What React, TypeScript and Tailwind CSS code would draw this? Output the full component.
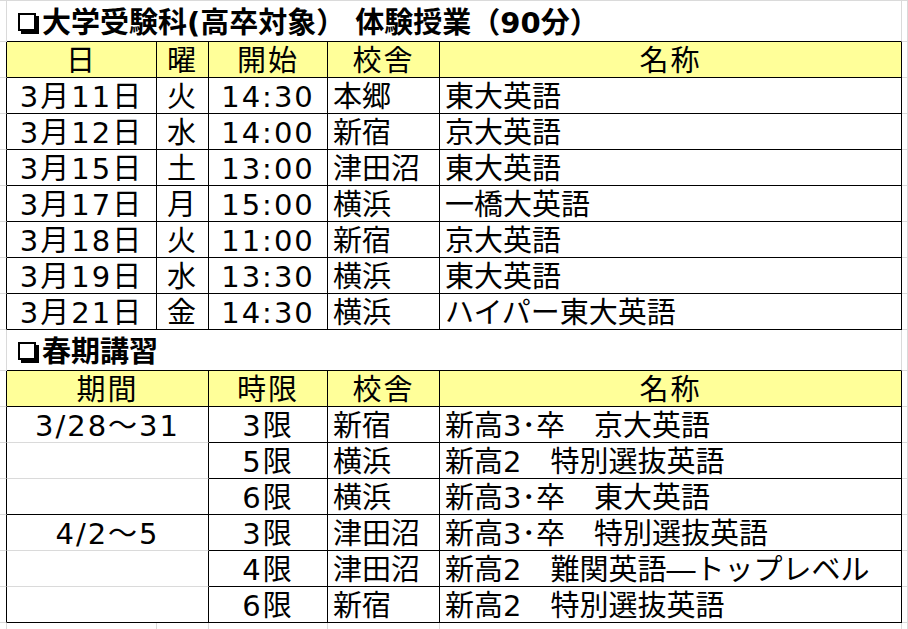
import type { ReactNode } from "react"

// Excel-style sheet: column boundaries at 7 / 157 / 209 / 328 / 440 / 902
const trial = [
  ["3月11日", "火", "14:30", "本郷", "東大英語"],
  ["3月12日", "水", "14:00", "新宿", "京大英語"],
  ["3月15日", "土", "13:00", "津田沼", "東大英語"],
  ["3月17日", "月", "15:00", "横浜", "一橋大英語"],
  ["3月18日", "火", "11:00", "新宿", "京大英語"],
  ["3月19日", "水", "13:30", "横浜", "東大英語"],
  ["3月21日", "金", "14:30", "横浜", "ハイパー東大英語"],
]

const spring: { term: string; period: string; school: string; name: string; last: boolean }[] = [
  { term: "3/28～31", period: "3限", school: "新宿", name: "新高3･卒　京大英語", last: false },
  { term: "", period: "5限", school: "横浜", name: "新高2　特別選抜英語", last: false },
  { term: "", period: "6限", school: "横浜", name: "新高3･卒　東大英語", last: true },
  { term: "4/2～5", period: "3限", school: "津田沼", name: "新高3･卒　特別選抜英語", last: false },
  { term: "", period: "4限", school: "津田沼", name: "新高2　難関英語―トップレベル", last: false },
  { term: "", period: "6限", school: "新宿", name: "新高2　特別選抜英語", last: true },
]

const RIGHT = {
  k: "border-r border-r-black",
  g: "border-r border-r-[#dadada]",
  n: "",
}
const BOTTOM = {
  k: "border-b border-b-black",
  g: "border-b border-b-[#dadada]",
  n: "",
}
const ALIGN = {
  c: "justify-center tracking-[2px]",
  l: "justify-start pl-[5px]",
  t: "justify-start pl-[11px] font-bold",
}

type Line = keyof typeof RIGHT

function Cell({
  w,
  r = "g",
  b = "g",
  align = "c",
  children,
}: {
  w: string
  r?: Line
  b?: Line
  align?: keyof typeof ALIGN
  children?: ReactNode
}) {
  return (
    <div
      className={`flex h-full shrink-0 items-center overflow-visible whitespace-pre pt-[4px] ${w} ${RIGHT[r]} ${BOTTOM[b]} ${ALIGN[align]}`}
    >
      {children}
    </div>
  )
}

const A = "w-[7px]"
const B = "w-[150px]"
const C = "w-[52px]"
const BC = "w-[202px]"
const D = "w-[119px]"
const E = "w-[112px]"
const F = "w-[462px]"
const BF = "w-[895px]"
const G = "w-[6px] grow"

// ❑ drawn as a shadowed box, the font's glyph has no shadow
function Box() {
  return (
    <span className="mr-[6px] mb-[3px] inline-block h-[18px] w-[18px] border-2 border-black bg-white shadow-[3px_3px_0_0_#000]" />
  )
}

function Title({ text }: { text: string }) {
  return (
    <div className="flex h-[41px]">
      <Cell w={A} />
      <Cell w={BF} b="k" align="t">
        <Box />
        <span>{text}</span>
      </Cell>
      <Cell w={G} />
    </div>
  )
}

export default function App() {
  return (
    <div className="min-h-screen w-full overflow-hidden bg-white font-['DejaVu_Sans','Noto_Sans_CJK_JP',sans-serif] text-[29px] leading-none text-black">
      <div className="h-[1px] border-b border-b-[#dadada]" />

      <Title text="大学受験科(高卒対象） 体験授業（90分）" />

      <div className="flex h-[36px]">
        <Cell w={A} r="k" />
        <div className="flex h-full bg-[#ffff99]">
          <Cell w={B} r="k" b="k">日</Cell>
          <Cell w={C} r="k" b="k">曜</Cell>
          <Cell w={D} r="k" b="k">開始</Cell>
          <Cell w={E} r="k" b="k">校舎</Cell>
          <Cell w={F} r="k" b="k">名称</Cell>
        </div>
        <Cell w={G} />
      </div>

      {trial.map((row, i) => (
        <div key={i} className="flex h-[36px]">
          <Cell w={A} r="k" />
          <Cell w={B} r="k" b="k">{row[0]}</Cell>
          <Cell w={C} r="k" b="k">{row[1]}</Cell>
          <Cell w={D} r="k" b="k">{row[2]}</Cell>
          <Cell w={E} r="k" b="k" align="l">{row[3]}</Cell>
          <Cell w={F} r="k" b="k" align="l">{row[4]}</Cell>
          <Cell w={G} />
        </div>
      ))}

      <Title text="春期講習" />

      <div className="flex h-[36px]">
        <Cell w={A} r="k" />
        <div className="flex h-full bg-[#ffff99]">
          <Cell w={BC} r="k" b="k">期間</Cell>
          <Cell w={D} r="k" b="k">時限</Cell>
          <Cell w={E} r="k" b="k">校舎</Cell>
          <Cell w={F} r="k" b="k">名称</Cell>
        </div>
        <Cell w={G} />
      </div>

      {spring.map((row, i) => (
        <div key={i} className="flex h-[36px]">
          <Cell w={A} r="k" />
          <Cell w={BC} r="k" b={row.last ? "k" : "g"}>{row.term}</Cell>
          <Cell w={D} r="k" b="k">{row.period}</Cell>
          <Cell w={E} r="k" b="k" align="l">{row.school}</Cell>
          <Cell w={F} r="k" b="k" align="l">{row.name}</Cell>
          <Cell w={G} />
        </div>
      ))}

      <div className="flex h-[36px]">
        <Cell w={A} />
        <Cell w={B} />
        <Cell w={C} />
        <Cell w={D} />
        <Cell w={E} />
        <Cell w={F} />
        <Cell w={G} />
      </div>
    </div>
  )
}
